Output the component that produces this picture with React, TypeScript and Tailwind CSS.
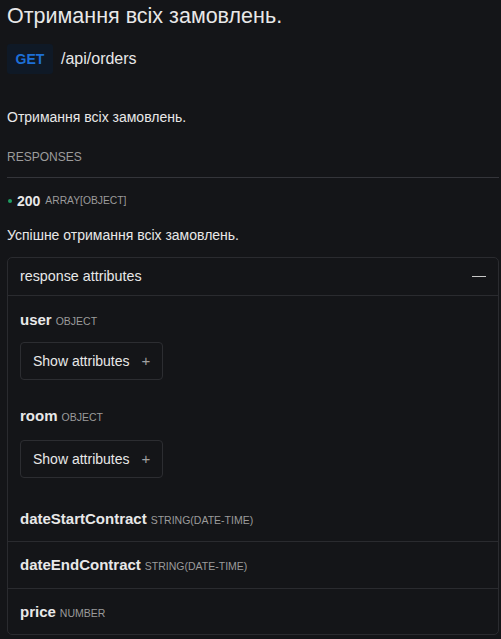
import React from "react";

type Item = {
  name: string;
  type: string;
  nested?: boolean;
  cls: string;
  btnCls?: string;
};

const Attr: React.FC<{ item: Item }> = ({ item }) => {
  return (
    <div className={`px-3 ${item.cls}`}>
      <div className="h-[20px] leading-[20px] whitespace-nowrap">
        <span className="text-[15px] leading-none font-bold text-[#e8e8e8]">{item.name}</span>
        <span className="ml-1 text-[10.5px] leading-none uppercase text-[#9b9b9b]">{item.type}</span>
      </div>
      {item.nested && (
        <button
          className={`${item.btnCls} flex h-[38px] items-center gap-3 rounded-[4px] border border-[#2c2d31] px-3 text-[14px] text-[#e8e8e8]`}
        >
          Show attributes
          <span className="text-[15px] text-[#a0a0a0]">+</span>
        </button>
      )}
    </div>
  );
};

const App: React.FC = () => {
  const attrs: Item[] = [
    { name: "user", type: "object", nested: true, cls: "pt-[14px] pb-[13px]", btnCls: "mt-[12px]" },
    { name: "room", type: "object", nested: true, cls: "pt-[13px] pb-[18px]", btnCls: "mt-[14px]" },
    { name: "dateStartContract", type: "string(date-time)", cls: "pt-[13px] pb-[12px] border-b border-[#2a2b2f]" },
    { name: "dateEndContract", type: "string(date-time)", cls: "py-[13px] border-b border-[#2a2b2f]" },
    { name: "price", type: "number", cls: "pt-[13px] pb-[12px]" },
  ];

  return (
    <div
      className="min-h-[639px] w-[501px] bg-[#141518] pl-[7px] pr-[2px] text-[#e8e8e8]"
      style={{ fontFamily: '"Liberation Sans", Arial, sans-serif' }}
    >
      <h1 className="pt-[1px] text-[21.5px] leading-[30px] font-normal">Отримання всіх замовлень.</h1>
      <div className="mt-[13px] flex items-center gap-2">
        <span className="flex h-[30px] w-[46px] items-center justify-center rounded-[3px] bg-[#0f1926] text-[14px] font-bold text-[#1d6fd6]">
          GET
        </span>
        <span className="text-[16px]">/api/orders</span>
      </div>
      <p className="mt-[33px] text-[14px] leading-[20px]">Отримання всіх замовлень.</p>
      <div className="mt-[20px] border-b border-[#34353a] pb-[10px] text-[12px] leading-[20px] text-[#9c9c9c]">
        RESPONSES
      </div>
      <div className="mt-[13px] flex items-center leading-[20px]">
        <span className="ml-[1px] h-[4px] w-[4px] rounded-full bg-[#1f9d63]" />
        <span className="ml-[5px] text-[14px] font-bold">200</span>
        <span className="ml-[5px] text-[10.3px] text-[#9b9b9b]">ARRAY[OBJECT]</span>
      </div>
      <p className="mt-[14px] text-[14px] leading-[20px]">Успішне отримання всіх замовлень.</p>
      <div className="mt-[12px] rounded-[5px] border border-[#2a2b2f]">
        <div className="flex h-[38px] items-center justify-between border-b border-[#2a2b2f] px-3">
          <span className="text-[14.3px]">response attributes</span>
          <span className="h-[1px] w-[14px] bg-[#c8c8c8]" />
        </div>
        {attrs.map((a) => (
          <Attr key={a.name} item={a} />
        ))}
      </div>
    </div>
  );
};

export default App;
